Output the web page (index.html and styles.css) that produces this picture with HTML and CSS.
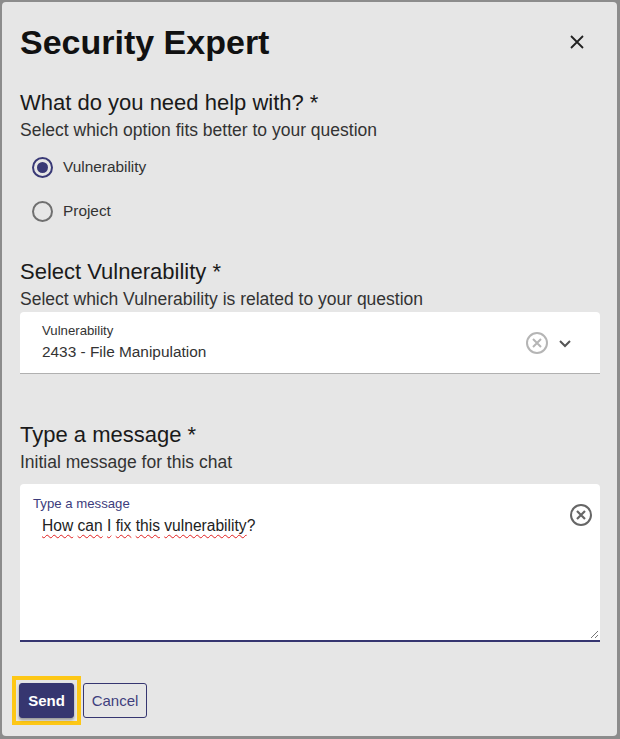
FILE: index.html
```html
<!DOCTYPE html>
<html lang="en">
<head>
<meta charset="utf-8">
<title>Security Expert</title>
<link rel="stylesheet" href="styles.css">
</head>
<body>
<div class="dialog">
  <header class="dialog-header">
    <h1 class="dialog-title">Security Expert</h1>
    <button class="close-btn" aria-label="Close">
      <svg width="16" height="16" viewBox="0 0 16 16"><path d="M2 2 L14 14 M14 2 L2 14" stroke="#222" stroke-width="1.8" fill="none"/></svg>
    </button>
  </header>

  <section class="section first">
    <h2 class="section-title">What do you need help with? *</h2>
    <p class="section-sub">Select which option fits better to your question</p>
    <div class="radio-group">
      <label class="radio-row"><span class="radio checked"><span class="dot"></span></span><span class="radio-label">Vulnerability</span></label>
      <label class="radio-row"><span class="radio"></span><span class="radio-label">Project</span></label>
    </div>
  </section>

  <section class="section second">
    <h2 class="section-title">Select Vulnerability *</h2>
    <p class="section-sub">Select which Vulnerability is related to your question</p>
    <div class="select-box">
      <div class="select-text">
        <div class="field-label">Vulnerability</div>
        <div class="field-value">2433 - File Manipulation</div>
      </div>
      <div class="select-icons">
        <svg width="24" height="24" viewBox="0 0 24 24"><circle cx="12" cy="12" r="10" stroke="#b5b5b5" stroke-width="2" fill="none"/><path d="M8 8 L16 16 M16 8 L8 16" stroke="#b5b5b5" stroke-width="2" fill="none"/></svg>
        <svg width="16" height="16" viewBox="0 0 16 16"><path d="M3 6 L8 11 L13 6" stroke="#555" stroke-width="2" fill="none"/></svg>
      </div>
    </div>
  </section>

  <section class="section third">
    <h2 class="section-title">Type a message *</h2>
    <p class="section-sub">Initial message for this chat</p>
    <div class="textarea-box">
      <div class="textarea-label">Type a message</div>
      <div class="textarea-value"><span class="spell">How</span> <span class="spell">can</span> <span class="spell">I</span> <span class="spell">fix</span> <span class="spell">this</span> <span class="spell">vulnerability</span>?</div>
      <svg class="textarea-clear" width="24" height="24" viewBox="0 0 24 24"><circle cx="12" cy="12" r="10" stroke="#666" stroke-width="2" fill="none"/><path d="M8 8 L16 16 M16 8 L8 16" stroke="#666" stroke-width="2.2" fill="none"/></svg>
      <svg class="resize" width="10" height="10" viewBox="0 0 10 10"><path d="M9 2 L2 9 M9 6 L6 9" stroke="#777" stroke-width="1" fill="none"/></svg>
    </div>
  </section>

  <footer class="dialog-footer">
    <span class="focus-ring"><button class="btn btn-primary">Send</button></span>
    <button class="btn btn-secondary">Cancel</button>
  </footer>
</div>
</body>
</html>
```

FILE: styles.css
```css
* { box-sizing: border-box; }
html, body { margin: 0; padding: 0; }
body {
  background: #8c8c8c;
  font-family: "Liberation Sans", Arial, sans-serif;
  color: #222;
  width: 620px;
  height: 739px;
  padding: 2px 3px 3px 2px;
}
.dialog {
  background: #e6e6e6;
  border-radius: 4px;
  height: 734px;
  padding: 21px 17px 11px 18px;
  display: flex;
  flex-direction: column;
}
.dialog-header {
  display: flex;
  justify-content: space-between;
  align-items: center;
}
.dialog-title {
  margin: 0;
  font-size: 34px;
  line-height: 38px;
  font-weight: bold;
  color: #111;
}
.close-btn {
  background: none;
  border: 0;
  padding: 0;
  margin-right: 15px;
  width: 16px;
  height: 16px;
  display: flex;
}
.section { display: flex; flex-direction: column; }
.section.first { margin-top: 28px; }
.section.second { margin-top: 25px; }
.section.third { margin-top: 47px; }
.section-title {
  margin: 0;
  font-size: 22px;
  line-height: 28px;
  font-weight: normal;
  color: #1a1a1a;
}
.section-sub {
  margin: 0;
  font-size: 17.5px;
  line-height: 26px;
  color: #333;
}
.radio-group { display: flex; flex-direction: column; padding-top: 2px; }
.radio-row {
  display: flex;
  align-items: center;
  height: 44px;
  padding-left: 12px;
}
.radio {
  width: 21px;
  height: 21px;
  border-radius: 50%;
  border: 2px solid #6f6f6f;
  display: flex;
  align-items: center;
  justify-content: center;
}
.radio.checked { border-color: #393976; }
.radio .dot {
  width: 11px;
  height: 11px;
  border-radius: 50%;
  background: #393976;
}
.radio-label {
  margin-left: 10px;
  font-size: 15.4px;
  color: #333;
}
.select-box {
  background: #fff;
  border-radius: 4px 4px 0 0;
  border-bottom: 1px solid #b0b0b0;
  height: 62px;
  display: flex;
  align-items: center;
  justify-content: space-between;
  padding: 0 27px 0 22px;
}
.field-label { font-size: 13.2px; line-height: 16px; color: #333; }
.field-value { font-size: 15.4px; line-height: 22px; color: #333; margin-top: 2px; }
.select-icons { display: flex; align-items: center; gap: 8px; }
.textarea-box {
  position: relative;
  margin-top: 9px;
  background: #fff;
  border-radius: 4px 4px 0 0;
  border-bottom: 2px solid #363670;
  height: 158px;
  padding: 12px 13px;
}
.textarea-label { font-size: 13.2px; line-height: 15px; color: #3c3c7c; }
.textarea-value { font-size: 15.6px; line-height: 20px; color: #222; padding-left: 9px; margin-top: 5px; }
.spell {
  text-decoration: underline wavy #e02020;
  text-decoration-thickness: 1px;
  text-underline-offset: 3px;
}
.textarea-clear { position: absolute; right: 7px; top: 19px; }
.resize { position: absolute; right: 1px; bottom: 1px; }
.dialog-footer {
  margin-top: auto;
  display: flex;
  gap: 2px;
  align-items: center;
}
.focus-ring {
  display: flex;
  margin-left: -8px;
  border: 4px solid #fdc716;
  padding: 3px;
}
.btn {
  font-family: "Liberation Sans", Arial, sans-serif;
  font-size: 15px;
  height: 35px;
  border-radius: 3px;
  padding: 0 6px;
  cursor: pointer;
}
.btn-primary {
  background: #363670;
  color: #fff;
  font-weight: bold;
  border: 1px solid #363670;
  width: 55px;
  box-shadow: 0 2px 3px rgba(0,0,0,0.35);
}
.btn-secondary {
  background: transparent;
  color: #3f3f7d;
  border: 1px solid #363670;
  width: 64px;
}
```
